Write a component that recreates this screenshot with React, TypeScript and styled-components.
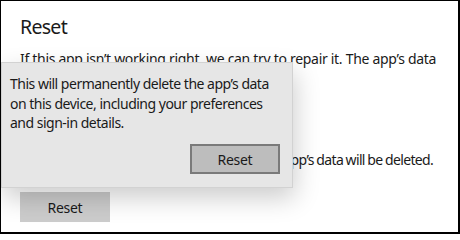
import { styled, createGlobalStyle } from "styled-components";

const GlobalStyle = createGlobalStyle`
  html, body {
    margin: 0;
    padding: 0;
    background: #ffffff;
  }
  * {
    box-sizing: border-box;
  }
`;

const App = () => {
  return (
    <>
      <GlobalStyle />
      <Frame>
        <Title>Reset</Title>
        <Text $after={12}>
          If this app isn’t working right, we can try to repair it. The app’s data won’t be
          affected.
        </Text>
        <Button $after={19}>Repair</Button>
        <Text $after={22} $tight>
          If this app still isn’t working right, reset it. The app’s data will be deleted.
        </Text>
        <Button>Reset</Button>

        {/* confirm flyout over the page */}
        <Flyout>
          <FlyoutText>
            This will permanently delete the app’s data on this device, including your
            preferences and sign-in details.
          </FlyoutText>
          <FlyoutActions>
            <ConfirmBtn>Reset</ConfirmBtn>
          </FlyoutActions>
        </Flyout>
      </Frame>
    </>
  );
};

export default App;

const Frame = styled.div`
  position: relative;
  width: 460px;
  height: 234px;
  overflow: hidden;
  border: 1px solid #000;
  border-right-width: 2px;
  border-bottom-width: 2px;
  padding: 12px 18px 0 19px;
  font-family: "Noto Sans", "Open Sans", sans-serif;
  letter-spacing: -0.3px;
  color: #1a1a1a;
`;

const Title = styled.h1`
  margin: 0 0 8px;
  font-size: 19.5px;
  font-weight: 400;
  line-height: 28px;
  letter-spacing: -0.7px;
`;

const Text = styled.p<{ $after?: number; $tight?: boolean }>`
  margin: 0 0 ${(p) => p.$after ?? 10}px;
  font-size: 14px;
  line-height: 20px;
  white-space: ${(p) => (p.$tight ? "nowrap" : "normal")};
  letter-spacing: ${(p) => (p.$tight ? "-0.65px" : "-0.3px")};
  word-spacing: ${(p) => (p.$tight ? "-0.5px" : "0")};
`;

const Button = styled.button<{ $after?: number }>`
  display: block;
  width: 90px;
  height: 30px;
  margin: 0 0 ${(p) => p.$after ?? 0}px;
  border: none;
  background: #cccccc;
  font-family: inherit;
  font-size: 14px;
  letter-spacing: -0.3px;
  color: #1a1a1a;
`;

const Flyout = styled.div`
  position: absolute;
  left: 0;
  top: 61px;
  width: 292px;
  height: 126px;
  display: flex;
  flex-direction: column;
  justify-content: space-between;
  padding: 11px 12px 13px 8px;
  background: #e6e6e6;
  border: 1px solid #d2d2d2;
  box-shadow: 2px 10px 24px rgba(0, 0, 0, 0.2);
`;

const FlyoutText = styled.p`
  margin: 0;
  font-size: 14px;
  line-height: 19.5px;
  letter-spacing: -0.5px;
  color: #1a1a1a;
`;

const FlyoutActions = styled.div`
  display: flex;
  justify-content: flex-end;
`;

const ConfirmBtn = styled.button`
  width: 90px;
  height: 30px;
  border: 2px solid #7a7a7a;
  background: #bdbdbd;
  font-family: inherit;
  font-size: 14px;
  letter-spacing: -0.3px;
  color: #1a1a1a;
`;
